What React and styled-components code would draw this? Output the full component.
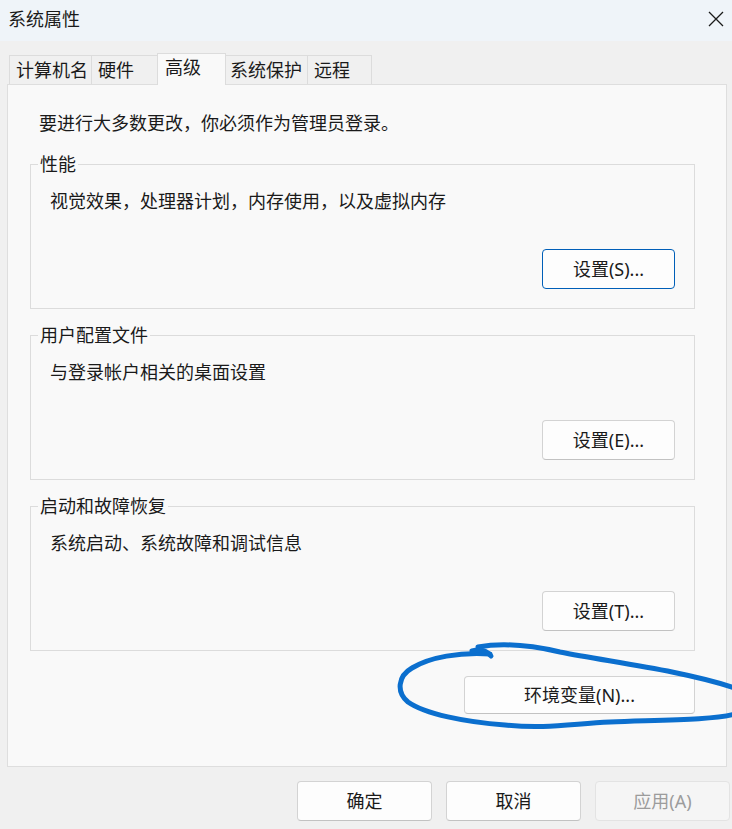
import React from "react";
import styled, { createGlobalStyle } from "styled-components";

const Global = createGlobalStyle`
  html, body { margin: 0; padding: 0; background: #f0f0f0; }
  body {
    font-family: "Noto Sans", "Noto Sans CJK SC", sans-serif;
    color: #1a1a1a;
  }
  * { box-sizing: border-box; }
`;

const Window = styled.div`
  position: relative;
  width: 732px;
  height: 829px;
  overflow: hidden;
  background: #f0f0f0;
  display: flex;
  flex-direction: column;
  font-size: 18px;
  line-height: 24px;
`;

const TitleBar = styled.div`
  flex: none;
  height: 41px;
  background: #eff4f9;
  display: flex;
  align-items: center;
  justify-content: space-between;
  padding: 0 8px 3px 8px;
`;

const Title = styled.div`
  font-size: 18px;
  color: #1a1a1a;
`;

const CloseIcon = styled.svg`
  width: 16px;
  height: 16px;
  display: block;
`;

const TabRow = styled.div`
  flex: none;
  height: 43px;
  display: flex;
  align-items: flex-end;
  padding-left: 9px;
`;

const Tab = styled.div`
  position: relative;
  z-index: ${(p) => (p.$active ? 2 : 1)};
  width: ${(p) => p.$w}px;
  height: ${(p) => (p.$active ? 32 : 29)}px;
  margin: ${(p) => (p.$active ? "0 -2px -1px -2px" : "0")};
  padding: ${(p) => (p.$active ? "1px 0 0 7px" : "2px 0 0 6px")};
  background: ${(p) => (p.$active ? "#f9f9f9" : "#f0f0f0")};
  border-top: 1px solid #dcdcdc;
  border-right: 1px solid #dcdcdc;
  border-left: ${(p) => (p.$first || p.$active ? "1px solid #dcdcdc" : "none")};
  white-space: nowrap;
`;

const Panel = styled.div`
  flex: none;
  margin-left: 7px;
  width: 720px;
  height: 683px;
  border: 1px solid #dedede;
  background: #f9f9f9;
  padding: 26px 31px 0 22px;
  display: flex;
  flex-direction: column;
`;

const Intro = styled.div`
  margin-left: 9px;
`;

const Group = styled.div`
  margin-top: ${(p) => p.$top}px;
  border: 1px solid #dcdcdc;
  padding: 0 19px 19px 19px;
  display: flex;
  flex-direction: column;
`;

const GroupLabel = styled.div`
  width: fit-content;
  margin: -13px 0 0 -12px;
  padding: 0 2px;
  background: #f9f9f9;
`;

const GroupText = styled.div`
  margin-top: 13px;
`;

const Button = styled.button`
  flex: none;
  width: ${(p) => p.$w}px;
  height: ${(p) => p.$h}px;
  margin-top: ${(p) => p.$top || 0}px;
  align-self: ${(p) => (p.$end ? "flex-end" : "auto")};
  padding: 0;
  font-family: inherit;
  font-size: 18px;
  line-height: 24px;
  color: #1a1a1a;
  background: #fdfdfd;
  border: 1px solid ${(p) => (p.$primary ? "#005fb8" : "#d3d3d3")};
  border-bottom-color: ${(p) => (p.$primary ? "#005fb8" : "#c2c2c2")};
  border-radius: 4px;

  &:disabled {
    background: #f5f5f5;
    border-color: #e3e3e3;
    color: #9c9c9c;
  }
`;

const Footer = styled.div`
  flex: none;
  display: flex;
  justify-content: flex-end;
  gap: 14px;
  padding: 14px 2px 0 0;
`;

const Annotation = styled.svg`
  position: absolute;
  left: 0;
  top: 0;
  width: 732px;
  height: 829px;
  pointer-events: none;
`;

const tabs = [
  { label: "计算机名", w: 83 },
  { label: "硬件", w: 67 },
  { label: "高级", w: 69, active: true },
  { label: "系统保护", w: 84 },
  { label: "远程", w: 64 },
];

const groups = [
  { label: "性能", text: "视觉效果，处理器计划，内存使用，以及虚拟内存", button: "设置(S)...", primary: true, top: 29 },
  { label: "用户配置文件", text: "与登录帐户相关的桌面设置", button: "设置(E)...", top: 26 },
  { label: "启动和故障恢复", text: "系统启动、系统故障和调试信息", button: "设置(T)...", top: 26 },
];

export default function App() {
  return (
    <>
      <Global />
      <Window>
        <TitleBar>
          <Title>系统属性</Title>
          <CloseIcon viewBox="0 0 16 16">
            <path d="M1 1 L15 15 M15 1 L1 15" stroke="#1a1a1a" strokeWidth="1.3" fill="none" />
          </CloseIcon>
        </TitleBar>
        <TabRow>
          {tabs.map((t, i) => (
            <Tab key={t.label} $w={t.w} $active={t.active} $first={i === 0}>
              {t.label}
            </Tab>
          ))}
        </TabRow>
        <Panel>
          <Intro>要进行大多数更改，你必须作为管理员登录。</Intro>
          {groups.map((g) => (
            <Group key={g.label} $top={g.top}>
              <GroupLabel>{g.label}</GroupLabel>
              <GroupText>{g.text}</GroupText>
              <Button $w={133} $h={40} $top={36} $end $primary={g.primary}>
                {g.button}
              </Button>
            </Group>
          ))}
          <Button $w={231} $h={38} $top={25} $end>
            环境变量(N)...
          </Button>
        </Panel>
        <Footer>
          <Button $w={135} $h={40}>确定</Button>
          <Button $w={135} $h={40}>取消</Button>
          <Button $w={135} $h={40} disabled>应用(A)</Button>
        </Footer>
        <Annotation viewBox="0 0 732 829">
          <path
            d="M 478 647 C 500 643, 530 645, 560 652 C 610 662, 680 670, 735 688 C 760 697, 760 710, 735 714 C 715 720, 660 720, 610 722 C 570 724, 545 729, 505 725 C 465 722, 425 714, 408 702 C 396 692, 398 676, 412 668 C 430 657, 460 652, 490 654"
            stroke="#0b6fce"
            strokeWidth="5"
            fill="none"
            strokeLinecap="round"
            strokeLinejoin="round"
          />
          <path d="M 472 651 C 480 649, 487 651, 491 656" stroke="#0b6fce" strokeWidth="5" fill="none" strokeLinecap="round" />
        </Annotation>
      </Window>
    </>
  );
}
